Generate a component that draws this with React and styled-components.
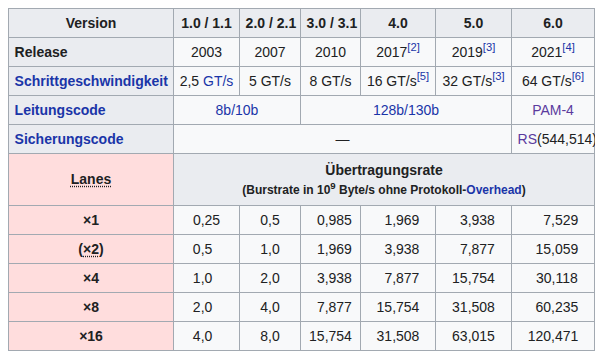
import React from "react";
import styled, { createGlobalStyle } from "styled-components";

const GlobalStyle = createGlobalStyle`
  body {
    margin: 8px;
    background: #ffffff;
    font-family: "Liberation Sans", Arial, sans-serif;
    color: #202122;
  }
`;

const Table = styled.table`
  border-collapse: collapse;
  table-layout: fixed;
  width: 586px;
  background: #f8f9fa;
  color: #202122;
  font-size: 14px;
  line-height: 1.6;
  border: 1px solid #a2a9b1;
`;

const Row = styled.tr`
  height: ${(p) => (p.$tall ? "52px" : "29px")};
`;

const Th = styled.th`
  border: 1px solid #a2a9b1;
  padding: 0 5.6px;
  font-weight: bold;
  background: ${(p) => (p.$pink ? "#ffdddd" : "#eaecf0")};
  text-align: ${(p) => p.$align || "center"};
  vertical-align: middle;
  white-space: nowrap;
`;

const Td = styled.td`
  border: 1px solid #a2a9b1;
  padding: 0 5.6px;
  text-align: center;
  vertical-align: middle;
  white-space: nowrap;
`;

const Link = styled.a`
  color: ${(p) => (p.$visited ? "#5b3b9e" : "#1a35a8")};
  text-decoration: none;
`;

const Sup = styled.sup`
  font-size: 80%;
  line-height: 1;
  vertical-align: super;
`;

const Abbr = styled.abbr`
  text-decoration: underline dotted #202122;
  text-underline-offset: 2px;
  cursor: help;
`;

const Sub = styled.div`
  font-size: 12px;
  line-height: 1.6;
`;

const Pad = styled.span`
  visibility: hidden;
`;

const Ref = ({ n }) => (
  <Sup>
    <Link href="#">[{n}]</Link>
  </Sup>
);

const widths = [165, 66, 61, 60, 75, 76, 83];

const rates = [
  ["×1", "0,25", "0,5", "0,985", "1,969", "3,938", "7,529"],
  ["(×2)", "0,5", "1,0", "1,969", "3,938", "7,877", "15,059"],
  ["×4", "1,0", "2,0", "3,938", "7,877", "15,754", "30,118"],
  ["×8", "2,0", "4,0", "7,877", "15,754", "31,508", "60,235"],
  ["×16", "4,0", "8,0", "15,754", "31,508", "63,015", "120,471"],
];

// longest value per column; the first column pads on the right
const fit = [4, 3, 6, 6, 6, 7];

const Num = ({ value, col }) => {
  const gap = "0".repeat(Math.max(0, fit[col] - value.length));
  if (col === 0) {
    return (
      <>
        {value}
        <Pad>{gap}</Pad>
      </>
    );
  }
  return (
    <>
      <Pad>{gap}</Pad>
      {value}
    </>
  );
};

const LaneLabel = ({ label }) => {
  if (label === "(×2)") {
    return (
      <>
        (<Abbr title="optional">×2</Abbr>)
      </>
    );
  }
  return label;
};

export default function App() {
  return (
    <>
      <GlobalStyle />
      <Table>
        <colgroup>
          {widths.map((w, i) => (
            <col key={i} style={{ width: w }} />
          ))}
        </colgroup>
        <tbody>
          <Row>
            <Th>Version</Th>
            <Th>1.0 / 1.1</Th>
            <Th>2.0 / 2.1</Th>
            <Th>3.0 / 3.1</Th>
            <Th>4.0</Th>
            <Th>5.0</Th>
            <Th>6.0</Th>
          </Row>
          <Row>
            <Th $align="left">Release</Th>
            <Td>2003</Td>
            <Td>2007</Td>
            <Td>2010</Td>
            <Td>
              2017
              <Ref n={2} />
            </Td>
            <Td>
              2019
              <Ref n={3} />
            </Td>
            <Td>
              2021
              <Ref n={4} />
            </Td>
          </Row>
          <Row>
            <Th $align="left">
              <Link href="#">Schrittgeschwindigkeit</Link>
            </Th>
            <Td>
              2,5 <Link href="#">GT/s</Link>
            </Td>
            <Td>5 GT/s</Td>
            <Td>8 GT/s</Td>
            <Td>
              16 GT/s
              <Ref n={5} />
            </Td>
            <Td>
              32 GT/s
              <Ref n={3} />
            </Td>
            <Td>
              64 GT/s
              <Ref n={6} />
            </Td>
          </Row>
          <Row>
            <Th $align="left">
              <Link href="#">Leitungscode</Link>
            </Th>
            <Td colSpan={2}>
              <Link href="#">8b/10b</Link>
            </Td>
            <Td colSpan={3}>
              <Link href="#">128b/130b</Link>
            </Td>
            <Td>
              <Link href="#" $visited>
                PAM-4
              </Link>
            </Td>
          </Row>
          <Row>
            <Th $align="left">
              <Link href="#">Sicherungscode</Link>
            </Th>
            <Td colSpan={5}>—</Td>
            <Td>
              <Link href="#" $visited>
                RS
              </Link>
              (544,514)
            </Td>
          </Row>
          <Row $tall>
            <Th $pink>
              <Abbr title="Anzahl der Lanes">Lanes</Abbr>
            </Th>
            <Th colSpan={6}>
              Übertragungsrate
              <Sub>
                (Burstrate in 10<Sup>9</Sup> Byte/s ohne Protokoll-
                <Link href="#">Overhead</Link>)
              </Sub>
            </Th>
          </Row>
          {rates.map(([lane, ...vals]) => (
            <Row key={lane}>
              <Th $pink>
                <LaneLabel label={lane} />
              </Th>
              {vals.map((v, i) => (
                <Td key={i}>
                  <Num value={v} col={i} />
                </Td>
              ))}
            </Row>
          ))}
        </tbody>
      </Table>
    </>
  );
}
